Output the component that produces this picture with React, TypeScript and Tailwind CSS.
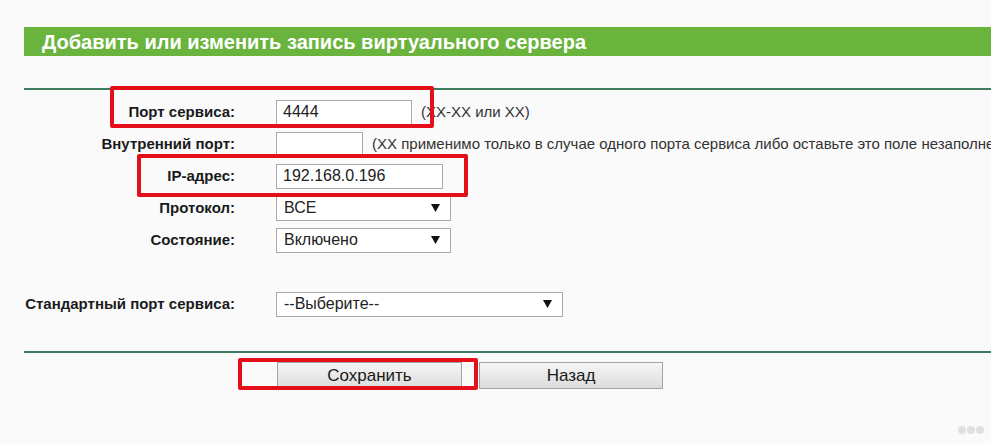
import React from "react";

const font = { fontFamily: '"Liberation Sans", Arial, sans-serif' };

function Arrow() {
  return (
    <svg width="9" height="8" viewBox="0 0 9 8" className="shrink-0">
      <path d="M0 0 L9 0 L4.5 8 Z" fill="#111" />
    </svg>
  );
}

function Select({ text, w }: { text: string; w: string }) {
  return (
    <div
      className={`${w} shrink-0 h-[25px] bg-white border border-[#a9a9a9] flex items-center justify-between pl-[7px] pr-[10px] text-[16px] text-[#222]`}
    >
      <span>{text}</span>
      <Arrow />
    </div>
  );
}

function Input({ text, w }: { text?: string; w: string }) {
  return (
    <div
      className={`${w} shrink-0 h-[25px] bg-white border border-[#a9a9a9] flex items-center pl-[6px] text-[16px] text-[#222]`}
    >
      {text}
    </div>
  );
}

function Row({
  label,
  children,
  className = "",
}: {
  label: string;
  children: React.ReactNode;
  className?: string;
}) {
  return (
    <div className={`flex items-center h-[32px] ${className}`}>
      <div className="w-[235px] shrink-0 text-right font-bold text-[15px] text-[#1a1a1a] whitespace-nowrap">
        {label}
      </div>
      <div className="ml-[41px] shrink-0 flex items-center whitespace-nowrap">{children}</div>
    </div>
  );
}

function Btn({ text, w }: { text: string; w: string }) {
  return (
    <div
      className={`${w} h-[27px] border border-[#a3a3a3] bg-gradient-to-b from-[#f6f6f6] to-[#dcdcdc] flex items-center justify-center text-[17px] text-[#1a1a1a]`}
    >
      {text}
    </div>
  );
}

export default function App() {
  return (
    <div
      className="relative w-[991px] h-[444px] overflow-hidden bg-[#fafafa]"
      style={font}
    >
      <div className="pt-[27px] pl-[24px]">
        <div className="h-[29px] bg-[#6ab43e] flex items-center pl-[18px]">
          <span className="text-white font-bold text-[20px] leading-none whitespace-nowrap">
            Добавить или изменить запись виртуального сервера
          </span>
        </div>
        <div className="mt-[32px] h-[2px] bg-[#3d7c5e]" />
      </div>

      <div className="mt-[6px]">
        <Row label="Порт сервиса:">
          <Input text="4444" w="w-[136px]" />
          <span className="ml-[9px] text-[15px] text-[#333]">(XX-XX или XX)</span>
        </Row>
        <Row label="Внутренний порт:">
          <Input w="w-[87px]" />
          <span className="ml-[9px] text-[15px] text-[#333]">
            (XX применимо только в случае одного порта сервиса либо оставьте это поле незаполненным)
          </span>
        </Row>
        <Row label="IP-адрес:">
          <Input text="192.168.0.196" w="w-[167px]" />
        </Row>
        <Row label="Протокол:">
          <Select text="ВСЕ" w="w-[175px]" />
        </Row>
        <Row label="Состояние:">
          <Select text="Включено" w="w-[175px]" />
        </Row>
        <Row label="Стандартный порт сервиса:" className="mt-[32px]">
          <Select text="--Выберите--" w="w-[287px]" />
        </Row>
      </div>

      <div className="pl-[24px] mt-[31px]">
        <div className="h-[2px] bg-[#3d7c5e]" />
      </div>

      <div className="mt-[9px] pl-[277px] flex gap-[17px]">
        <Btn text="Сохранить" w="w-[185px]" />
        <Btn text="Назад" w="w-[184px]" />
      </div>

      {/* red highlight overlays */}
      <div className="absolute left-[110px] top-[86px] w-[324px] h-[42px] border-[4px] border-[#e3101c] rounded-[2px]" />
      <div className="absolute left-[137px] top-[154px] w-[331px] h-[43px] border-[4px] border-[#e3101c] rounded-[2px]" />
      <div className="absolute left-[238px] top-[358px] w-[240px] h-[32px] border-[4px] border-[#e3101c] rounded-[2px]" />

      {/* watermark */}
      <div className="absolute left-[958px] top-[426px] flex gap-[1px] opacity-60">
        <div className="w-[8px] h-[8px] rounded-full bg-[#cfcfcf]" />
        <div className="w-[8px] h-[8px] rounded-full bg-[#cfcfcf]" />
        <div className="w-[8px] h-[8px] rounded-full bg-[#cfcfcf]" />
      </div>
    </div>
  );
}
